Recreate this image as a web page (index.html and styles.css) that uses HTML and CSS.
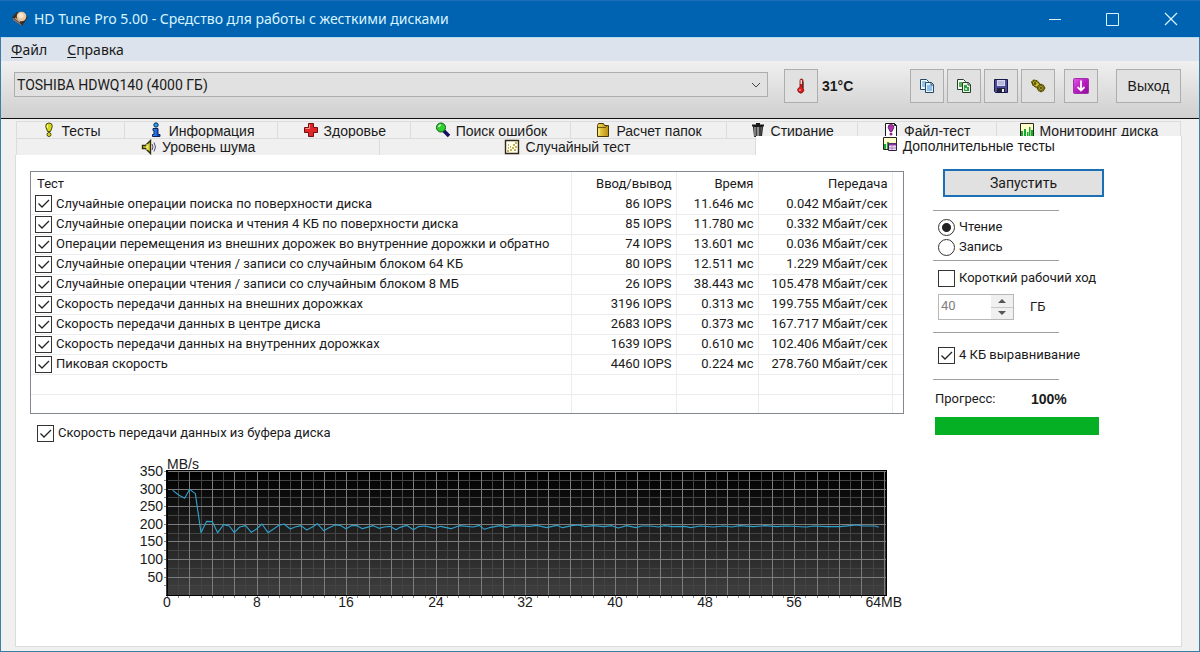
FILE: index.html
```html
<!DOCTYPE html>
<html lang="ru">
<head>
<meta charset="utf-8">
<title>HD Tune Pro 5.00</title>
<link rel="stylesheet" href="styles.css">
</head>
<body>
<svg class="defs" width="0" height="0" aria-hidden="true">
  <defs>
    <linearGradient id="plot-fill" x1="0" y1="0" x2="0" y2="1">
      <stop offset="0" stop-color="#000"/><stop offset="0.2" stop-color="#0c0c0c"/><stop offset="1" stop-color="#404040"/>
    </linearGradient>
    <linearGradient id="blue-fill" x1="0" y1="0" x2="1" y2="0"><stop offset="0" stop-color="#3aa0ff"/><stop offset="1" stop-color="#0030c0"/></linearGradient>
    <linearGradient id="magenta-fill" x1="0" y1="0" x2="1" y2="1"><stop offset="0" stop-color="#e45ce8"/><stop offset="0.5" stop-color="#b81cc0"/><stop offset="1" stop-color="#8c0c98"/></linearGradient>
    <linearGradient id="gold-fill" x1="0" y1="0" x2="1" y2="0"><stop offset="0" stop-color="#f4dc58"/><stop offset="1" stop-color="#b88c10"/></linearGradient>
  </defs>
</svg>
<div class="window">
  <header class="titlebar">
    <svg class="app-icon" viewBox="0 0 18 18"><path d="M1 7 6 2l11 5-6 9z" fill="#3a2c26"/><path d="M2 8l8 6 1 2-9-6z" fill="#8a7468"/><circle cx="10.500" cy="6.500" r="4.800" fill="#e9c8a4"/><circle cx="10" cy="5.500" r="2.600" fill="#f8e6cc"/><path d="M4 8l5 4" stroke="#c8a890" stroke-width="1.500"/></svg>
    <h1 class="title">HD Tune Pro 5.00 - Средство для работы с жесткими дисками</h1>
    <div class="caption-buttons">
      <button class="caption" aria-label="Свернуть"><svg viewBox="0 0 14 14"><path d="M1 7.500h12" stroke="#d8f4ff"/></svg></button>
      <button class="caption" aria-label="Развернуть"><svg viewBox="0 0 14 14"><path d="M.5 1.500h12v12h-12z" fill="none" stroke="#d8f4ff"/></svg></button>
      <button class="caption" aria-label="Закрыть"><svg viewBox="0 0 14 14"><path d="M1 1l12 12M13 1L1 13" stroke="#d8f4ff" stroke-width="1.200"/></svg></button>
    </div>
  </header>
  <nav class="menubar">
    <button class="menu"><u>Ф</u>айл</button>
    <button class="menu"><u>С</u>правка</button>
  </nav>
  <div class="toolbar">
    <select class="drive" aria-label="Диск"><option>TOSHIBA HDWQ140 (4000 ГБ)</option></select>
    <button class="tool" aria-label="Температура"><svg viewBox="0 0 16 16"><path d="M7 2.500a1.500 1.500 0 0 1 3 0V10a3 3 0 1 1-4.500 0L7 9z" fill="#e01818" stroke="#701010" stroke-width=".8"/><path d="M7.500 2h1.500v4H7.500z" fill="#f0d8d8"/><path d="M10 4v6" stroke="#333"/><circle cx="7" cy="12" r="1" fill="#ff9090"/></svg></button>
    <span class="temp">31°C</span>
    <div class="tool-group">
      <button class="tool" aria-label="Копировать текст"><svg viewBox="0 0 16 16"><path d="M1.500 1.500h6l2 2v8h-8z" fill="#eef8ff" stroke="#244868"/><path d="M3 4h4M3 6h4M3 8h4" stroke="#4a90d0"/><path d="M6.500 4.500h6l2 2v8h-8z" fill="#e4f4ff" stroke="#244868"/><path d="M12 4.500V7h2.500" fill="none" stroke="#244868"/><path d="M8 8h5M8 10h5M8 12h5" stroke="#3c88d0"/></svg></button>
      <button class="tool" aria-label="Копировать снимок"><svg viewBox="0 0 16 16"><path d="M1.500 1.500h6l2 2v8h-8z" fill="#f4fff4" stroke="#284028"/><path d="M3 4h3v5H3z" fill="#58b058"/><path d="M6.500 4.500h6l2 2v8h-8z" fill="#e8f8e8" stroke="#284028"/><path d="M12 4.500V7h2.500" fill="none" stroke="#284028"/><path d="M8 7h3v2h2v4H8z" fill="#38a048"/><path d="M9 10h2v2H9z" fill="#b8e8b8"/></svg></button>
      <button class="tool" aria-label="Сохранить"><svg viewBox="0 0 16 16"><path d="M1.500 1.500h13v13h-12l-1-1z" fill="#4a4c98" stroke="#181848"/><path d="M4 2h8v6H4z" fill="#d8d8f0"/><path d="M5 4h6M5 6h6" stroke="#9898c8"/><path d="M4 10h8v4H4z" fill="#202038"/><path d="M9 11h2v3H9z" fill="#f0f0f0"/></svg></button>
      <button class="tool" aria-label="Настройки"><svg viewBox="0 0 16 16" stroke="#504808" stroke-width="1"><ellipse cx="5.500" cy="5.500" rx="4.200" ry="3" transform="rotate(35 5.500 5.500)" fill="#c8b820" stroke-dasharray="2 1"/><ellipse cx="6" cy="6" rx="3.800" ry="2.600" transform="rotate(35 6 6)" fill="#d0c42c"/><circle cx="5" cy="5.500" r="1" fill="#706408"/><circle cx="11" cy="10" r="3.600" fill="#c8b820"/><path d="M11 5.500v9M6.500 10h9M8 7l6 6M14 7l-6 6" stroke="#605410" stroke-width=".8"/><circle cx="11" cy="10" r="2.300" fill="#dccc40"/><circle cx="11" cy="10" r=".8" fill="#605410"/></svg></button>
    </div>
    <button class="tool" aria-label="Свернуть в трей"><svg viewBox="0 0 16 16"><rect x=".5" y=".5" width="15" height="15" rx="1" fill="url(#magenta-fill)" stroke="#a030a8"/><path d="M8 2.500v10M4.500 9L8 12.500 11.500 9" fill="none" stroke="#fff" stroke-width="1.800"/></svg></button>
    <button class="exit">Выход</button>
  </div>
  <main class="workspace">
    <div class="tabs" role="tablist">
      <div class="tab-row tab-row-top">
        <button class="tab" role="tab"><svg viewBox="0 0 16 16"><path d="M8 1a3.300 3.300 0 0 1 3.300 3.500L9.500 9.500h-3L4.700 4.500A3.300 3.300 0 0 1 8 1z" fill="#d8d820" stroke="#48480c"/><path d="M6.500 3v3" stroke="#fcfca0"/><circle cx="8" cy="12.500" r="2" fill="#d8d820" stroke="#48480c"/></svg>Тесты</button>
        <button class="tab" role="tab"><svg viewBox="0 0 16 16"><circle cx="8" cy="3" r="2.200" fill="#28a0e8" stroke="#103060"/><path d="M5 6.500h5v6h2v2H4.500v-2H6v-4H5z" fill="url(#blue-fill)" stroke="#102050"/></svg>Информация</button>
        <button class="tab" role="tab"><svg viewBox="0 0 16 16"><path d="M5.500 1.500h5v4h4v5h-4v4h-5v-4h-4v-5h4z" fill="#e02828" stroke="#701010"/><path d="M6.500 2.500v4h-4" fill="none" stroke="#ff9090"/></svg>Здоровье</button>
        <button class="tab" role="tab"><svg viewBox="0 0 16 16"><path d="M8.500 8.500l5.500 5.500" stroke="#101060" stroke-width="3.500"/><circle cx="6" cy="5.500" r="4.500" fill="#30d030" stroke="#106010"/><path d="M3.500 5A3 3 0 0 1 6 3" fill="none" stroke="#c0ffc0" stroke-width="1.500"/></svg>Поиск ошибок</button>
        <button class="tab" role="tab"><svg viewBox="0 0 16 16"><path d="M2.500 3.500l1-2h5l1 2h4v11h-11z" fill="url(#gold-fill)" stroke="#483808"/><path d="M2.500 5.500h8l1.500-2" fill="none" stroke="#705810"/><path d="M4 7v6" stroke="#fff4a0"/></svg>Расчет папок</button>
        <button class="tab" role="tab"><svg viewBox="0 0 16 16"><path d="M3.500 4.500h9l-1 10h-7z" fill="#686868" stroke="#181818"/><path d="M2 3.500h12M6 2h4" stroke="#181818" stroke-width="2"/><path d="M6 5v9M10 5v9" stroke="#181818"/><path d="M5 5v9M8 5v9" stroke="#b8b8b8"/></svg>Стирание</button>
        <button class="tab" role="tab"><svg viewBox="0 0 16 16"><path d="M2.500 1.500h9l2 2v11h-11z" fill="#fff" stroke="#181818"/><path d="M11.500 1.500v2h2" fill="none" stroke="#181818"/><path d="M8 2.500a2.800 2.800 0 0 1 2.800 3L9 9.500H7L5.200 5.500A2.800 2.800 0 0 1 8 2.500z" fill="#b030b0" stroke="#501050" stroke-width=".8"/><circle cx="8" cy="12" r="1.500" fill="#902090"/></svg>Файл-тест</button>
        <button class="tab" role="tab"><svg viewBox="0 0 16 16"><path d="M1.500 1.500h13v13h-13z" fill="#ffffcc" stroke="#282818"/><path d="M2 9h2v5H2zM5 7h2v7H5zM8 10h1.500v4H8zM10 5h1.500v9H10zM12 8h2v6h-2z" fill="#18a838"/></svg>Мониторинг диска</button>
      </div>
      <div class="tab-row tab-row-bottom">
        <button class="tab" role="tab"><svg viewBox="0 0 16 16"><path d="M1.500 6.500h3l5-5v13l-5-5h-3z" fill="#d8d030" stroke="#303008" stroke-width="1.400"/><path d="M6 5v6" stroke="#fff8a0"/><path d="M11 5q2 3 0 6M13 3.500q3 4.500 0 9" fill="none" stroke="#504878"/></svg>Уровень шума</button>
        <button class="tab" role="tab"><svg viewBox="0 0 16 16"><path d="M1.500 1.500h13v13h-13z" fill="#fffff0" stroke="#302818" stroke-width="1.400"/><path d="M3 12h2M4 9h1M6 11h2M6 8h1M8 9h2M9 6h2M11 4h2M11 8h2M10 11h2M4 6h1" stroke="#b09820" stroke-width="1.300"/></svg>Случайный тест</button>
        <button class="tab tab-active" role="tab" aria-selected="true"><svg viewBox="0 0 16 16"><path d="M1.500 1.500h13v12h-13z" fill="#ffffcc" stroke="#282818"/><path d="M2 8h2v5H2zM5 6h2v7H5z" fill="#18a838"/><path d="M6.500 7.500h8v7h-8z" fill="#f0d8f8" stroke="#302040"/><path d="M7 8.500h7" stroke="#8838a0" stroke-width="2"/><path d="M7 12h7M10 9v5" stroke="#a880b8"/></svg>Дополнительные тесты</button>
      </div>
    </div>
    <div class="panel">
      <section class="results">
        <div class="table-box">
        <table class="grid">
          <colgroup><col><col class="c-io"><col class="c-time"><col class="c-rate"><col class="c-pad"></colgroup>
          <thead><tr><th>Тест</th><th>Ввод/вывод</th><th>Время</th><th>Передача</th><th></th></tr></thead>
          <tbody>
            <tr><td><label><input type="checkbox" checked>Случайные операции поиска по поверхности диска</label></td><td>86 IOPS</td><td>11.646 мс</td><td>0.042 Мбайт/сек</td><td></td></tr>
            <tr><td><label><input type="checkbox" checked>Случайные операции поиска и чтения 4 КБ по поверхности диска</label></td><td>85 IOPS</td><td>11.780 мс</td><td>0.332 Мбайт/сек</td><td></td></tr>
            <tr><td><label><input type="checkbox" checked>Операции перемещения из внешних дорожек во внутренние дорожки и обратно</label></td><td>74 IOPS</td><td>13.601 мс</td><td>0.036 Мбайт/сек</td><td></td></tr>
            <tr><td><label><input type="checkbox" checked>Случайные операции чтения / записи со случайным блоком 64 КБ</label></td><td>80 IOPS</td><td>12.511 мс</td><td>1.229 Мбайт/сек</td><td></td></tr>
            <tr><td><label><input type="checkbox" checked>Случайные операции чтения / записи со случайным блоком 8 МБ</label></td><td>26 IOPS</td><td>38.443 мс</td><td>105.478 Мбайт/сек</td><td></td></tr>
            <tr><td><label><input type="checkbox" checked>Скорость передачи данных на внешних дорожках</label></td><td>3196 IOPS</td><td>0.313 мс</td><td>199.755 Мбайт/сек</td><td></td></tr>
            <tr><td><label><input type="checkbox" checked>Скорость передачи данных в центре диска</label></td><td>2683 IOPS</td><td>0.373 мс</td><td>167.717 Мбайт/сек</td><td></td></tr>
            <tr><td><label><input type="checkbox" checked>Скорость передачи данных на внутренних дорожках</label></td><td>1639 IOPS</td><td>0.610 мс</td><td>102.406 Мбайт/сек</td><td></td></tr>
            <tr><td><label><input type="checkbox" checked>Пиковая скорость</label></td><td>4460 IOPS</td><td>0.224 мс</td><td>278.760 Мбайт/сек</td><td></td></tr>
            <tr><td></td><td></td><td></td><td></td><td></td></tr>
            <tr><td></td><td></td><td></td><td></td><td></td></tr>
          </tbody>
        </table>
        </div>
        <label class="buffer"><input type="checkbox" checked>Скорость передачи данных из буфера диска</label>
        <svg class="chart" id="chart" viewBox="30 456 874 156" role="img" aria-label="Скорость передачи, MB/s">
          <rect x="166" y="470" width="721" height="126" fill="url(#plot-fill)"/>
          <g id="lines" shape-rendering="crispEdges"></g>
          <path d="M166 470.500h721M167 470v126M166 595.500h721M886.500 470v126" fill="none" stroke="#000" shape-rendering="crispEdges"/>
          <g id="labels"><text x="167" y="469">MB/s</text></g>
          <g transform="translate(130 450) scale(.33333)"><polyline id="curve" fill="none" stroke="#2f9fc8" stroke-width="3.400" stroke-linejoin="round"/></g>
        </svg>
      </section>
      <aside class="side">
        <button class="start">Запустить</button>
        <div class="group group-mode">
          <label><input type="radio" name="mode" checked>Чтение</label>
          <label><input type="radio" name="mode">Запись</label>
        </div>
        <div class="group group-stroke">
          <label><input type="checkbox">Короткий рабочий ход</label>
          <div class="stroke-row">
            <div class="spin">
              <input type="text" value="40" aria-label="Размер, ГБ" disabled>
              <div class="spin-buttons"><button aria-label="Больше" disabled><svg viewBox="0 0 8 5"><path d="M0 5l4-4 4 4z" fill="#555"/></svg></button><button aria-label="Меньше" disabled><svg viewBox="0 0 8 5"><path d="M0 0l4 4 4-4z" fill="#555"/></svg></button></div>
            </div>
            <span>ГБ</span>
          </div>
        </div>
        <div class="group group-align">
          <label><input type="checkbox" checked>4 КБ выравнивание</label>
        </div>
        <div class="group group-progress">
          <div class="progress-head"><span>Прогресс:</span><strong>100%</strong></div>
          <div class="bar" role="progressbar" aria-valuenow="100"></div>
        </div>
      </aside>
    </div>
  </main>
</div>
<script src="chart.js"></script>
</body>
</html>
```
FILE: styles.css
```css
* { box-sizing: border-box; }
body { margin: 0; font: 14px/20px "Liberation Sans", Arial, sans-serif; color: #1a1a1a; }
button { font: inherit; color: inherit; padding: 0; border: 0; background: none; }
.defs { position: absolute; }
.window { min-height: 100vh; display: flex; flex-direction: column; background: #f0f0f0; border: 1px solid #3a7ea0; border-top: 0; }

.titlebar { display: flex; align-items: center; height: 37px; margin: 0 -1px; padding-left: 11px; background: #0063b1; border-top: 1px solid #1c70b8; color: #d8f4ff; }
.app-icon { width: 18px; height: 18px; }
.title { flex: 1; margin: 0 0 0 5px; font: 14px/20px "Noto Sans", sans-serif; }
.caption-buttons { display: flex; }
.caption { width: 58px; height: 36px; display: grid; place-items: center; }
.caption svg { width: 14px; height: 14px; }

.menubar { display: flex; gap: 20px; height: 24px; padding-left: 10px; background: #dce3ec; border-top: 1px solid #b8d8ee; }
.menu { font: 14px/24px "Noto Sans", sans-serif; }
.menu u { text-underline-offset: 2px; }

.toolbar { display: flex; align-items: center; height: 58px; padding: 0 18px 7px 13px; background: linear-gradient(#f0f0f0, #cfcfcf); border-bottom: 1px solid #101010; }
.drive { flex: 1; height: 25px; margin: -3px 16px 0 0; padding: 0 2px; font: 14px/20px Roboto, sans-serif; color: inherit; border: 1px solid #adadad; border-radius: 0; appearance: none; background: #e1e1e1 url("data:image/svg+xml,%3Csvg xmlns='http://www.w3.org/2000/svg' width='10' height='6'%3E%3Cpath d='M1 1l4 4 4-4' fill='none' stroke='%23444'/%3E%3C/svg%3E") no-repeat right 6px center; }
.tool { width: 34px; height: 34px; display: grid; place-items: center; background: #e1e1e1; border: 1px solid #adadad; }
.tool svg { width: 16px; height: 16px; }
.temp { width: 92px; padding-left: 4px; font-weight: bold; }
.tool-group { display: flex; gap: 3px; margin-right: 9px; }
.exit { width: 65px; height: 34px; margin-left: 18px; background: #e1e1e1; border: 1px solid #adadad; }

.workspace { flex: 1; display: flex; flex-direction: column; padding: 2px 17px 4px 14px; }
.tab-row { display: grid; padding: 0 1px; }
.tab-row-top { grid-template-columns: 109fr 153fr 133fr 160fr 155fr 131fr 139fr 184fr; }
.tab-row-bottom { grid-template-columns: 364fr 375fr 426fr; padding-right: 0; }
.tab { display: flex; align-items: flex-start; justify-content: center; gap: 5px; height: 17px; overflow: hidden; border: 1px solid #dcdcdc; border-width: 1px 1px 0 0; line-height: 18px; }
.tab svg { width: 16px; height: 16px; }
.tab:first-child { border-left-width: 1px; }
.tab-row-bottom .tab { line-height: 17px; }
.tab-row-bottom .tab-active { height: 19px; margin-top: -2px; background: #fff; border-top: 0; line-height: 20px; }

.panel { flex: 1; display: flex; gap: 29px; padding: 16px 78px 0 14px; background: #fff; border: 1px solid #dcdcdc; border-top: 0; font: 13px/20px Roboto, "Liberation Sans", sans-serif; }
.results { flex: 1; }
.table-box { border: 1px solid #828790; }
.grid { width: 100%; table-layout: fixed; border-collapse: collapse; }
.c-io { width: 105px; }
.c-time { width: 82px; }
.c-rate { width: 134px; }
.c-pad { width: 11px; }
.grid th, .grid td { height: 20px; padding: 0 4px; text-align: right; font-weight: normal; line-height: 18px; border: 1px solid #ececec; border-width: 0 1px 1px 0; white-space: nowrap; }
.grid th { height: 22px; border-bottom-width: 0; padding-top: 2px; }
.grid th:first-child { text-align: left; padding-left: 6px; }
.grid td:first-child { text-align: left; }
.grid tr > :last-child { border-right: 0; padding: 0; }
.grid tr:last-child td { height: 19px; border-bottom: 0; }

label { display: flex; align-items: center; gap: 4px; }
input[type="checkbox"], input[type="radio"] { appearance: none; flex: none; width: 17px; height: 17px; margin: 0; border: 1px solid #333; background: #fff; }
input[type="radio"] { border-radius: 50%; }
input[type="checkbox"]:checked { background: #fff url("data:image/svg+xml,%3Csvg xmlns='http://www.w3.org/2000/svg' width='15' height='15'%3E%3Cpath d='M2.500 7.500l3.500 3.500 7-7' fill='none' stroke='%23222' stroke-width='1.300'/%3E%3C/svg%3E") center no-repeat; }
input[type="radio"]:checked { background: radial-gradient(circle, #222 4px, #fff 5px); }

.buffer { margin: 9px 0 0 7px; }
.chart { display: block; width: 100%; margin-top: 13px; font: 14px "Liberation Sans", Arial, sans-serif; fill: #1a1a1a; }

.side { width: 170px; display: flex; flex-direction: column; }
.start { width: 161px; height: 28px; margin: -2px 0 13px 10px; background: #e1e1e1; border: 2px solid #1a6fb5; font-size: 14px; }
.group { border-top: 1px solid #a0a0a0; border-image: linear-gradient(90deg, #a0a0a0 126px, transparent 126px) 1; padding-left: 5px; }
.group-mode { height: 50px; padding-top: 6px; }
.group-stroke { height: 72px; padding-top: 7px; }
.group-align { height: 47px; padding-top: 12px; }
.group-progress { padding: 9px 4px 0 2px; }
.group label { white-space: nowrap; }
.stroke-row { display: flex; align-items: center; gap: 16px; margin-top: 6px; }
.spin { display: flex; width: 76px; height: 26px; border: 1px solid #b8b8b8; background: #fff; }
.spin input { flex: 1; min-width: 0; padding: 0 2px 2px; border: 0; background: none; font: inherit; color: #808080; }
.spin-buttons { width: 22px; display: grid; gap: 1px; background: #c8c8c8; }
.spin-buttons button { display: grid; place-items: center; background: #f0f0f0; }
.spin-buttons svg { width: 8px; height: 5px; }
.progress-head { display: flex; }
.progress-head span { width: 96px; }
.progress-head strong { font: bold 14px/20px "Liberation Sans", Arial, sans-serif; }
.bar { height: 18px; margin-top: 8px; background: #06b025; }
```
FILE: chart.js
```js
const NS = "http://www.w3.org/2000/svg";
const left = 167, top0 = 471;
const stepX = 11.2, stepY = 17.6;
const lines = document.getElementById("lines");
const labels = document.getElementById("labels");

function line(x1, y1, x2, y2, color) {
  const el = document.createElementNS(NS, "line");
  Object.entries({ x1, y1, x2, y2, stroke: color }).forEach(([k, v]) => el.setAttribute(k, v));
  lines.append(el);
}
function label(x, y, anchor, text) {
  const el = document.createElementNS(NS, "text");
  el.setAttribute("x", x);
  el.setAttribute("y", y);
  el.setAttribute("text-anchor", anchor);
  el.textContent = text;
  labels.append(el);
}

for (const major of [false, true]) {
  const color = major ? "#7c7c7c" : "#444";
  for (let i = 0; i <= 64; i++) {
    if ((i % 2 === 0) !== major) continue;
    const x = Math.round(left + i * stepX) + 0.5;
    if (i > 0) line(x, 471, x, 595, color);
    line(x, 596, x, 598, "#888");
  }
  for (let i = 0; i < 14; i++) {
    if ((i % 2 === 0) !== major) continue;
    const y = Math.round(top0 + i * stepY / 2) + 0.5;
    line(left, y, 886, y, color);
    line(164, y, 166, y, "#888");
  }
}
for (let v = 350, i = 0; v > 0; v -= 50, i++) label(163, Math.round(476 + i * stepY), "end", v);
for (let v = 0; v <= 56; v += 8) label(Math.round(left + v * stepX), 607, "middle", v);
label(902, 607, "end", "64MB");

const curve = [
  [128,121],[146,135],[164,145],[179,118],[196,131],[213,248],[230,214],[247,215],[263,248],[281,224],
  [298,228],[313,248],[329,231],[347,227],[364,247],[380,237],[396,222],[414,248],[447,226],[462,222],
  [481,237],[495,231],[513,227],[530,240],[547,231],[562,221],[581,242],[597,233],[615,225],[630,226],
  [648,236],[664,227],[682,227],[697,236],[730,227],[747,235],[762,231],[780,229],[798,239],[810,232],
  [830,226],[850,239],[865,230],[885,228],[915,235],[932,229],[963,236],[988,227],[1030,231],[1048,226],
  [1063,238],[1078,233],[1110,227],[1130,232],[1150,227],[1200,229],[1220,226],[1250,233],[1280,226],
  [1298,233],[1325,227],[1345,225],[1365,230],[1390,227],[1420,230],[1445,227],[1465,234],[1490,227],
  [1518,233],[1535,228],[1560,228],[1585,231],[1605,227],[1625,230],[1665,229],[1682,233],[1710,228],
  [1750,231],[1780,228],[1805,231],[1830,227],[1870,230],[1905,227],[1940,230],[1970,228],[2030,231],
  [2050,228],[2090,230],[2130,230],[2160,227],[2180,225],[2200,228],[2235,228],[2246,232]
];
document.getElementById("curve").setAttribute("points", curve.map(p => p.join(",")).join(" "));
```
